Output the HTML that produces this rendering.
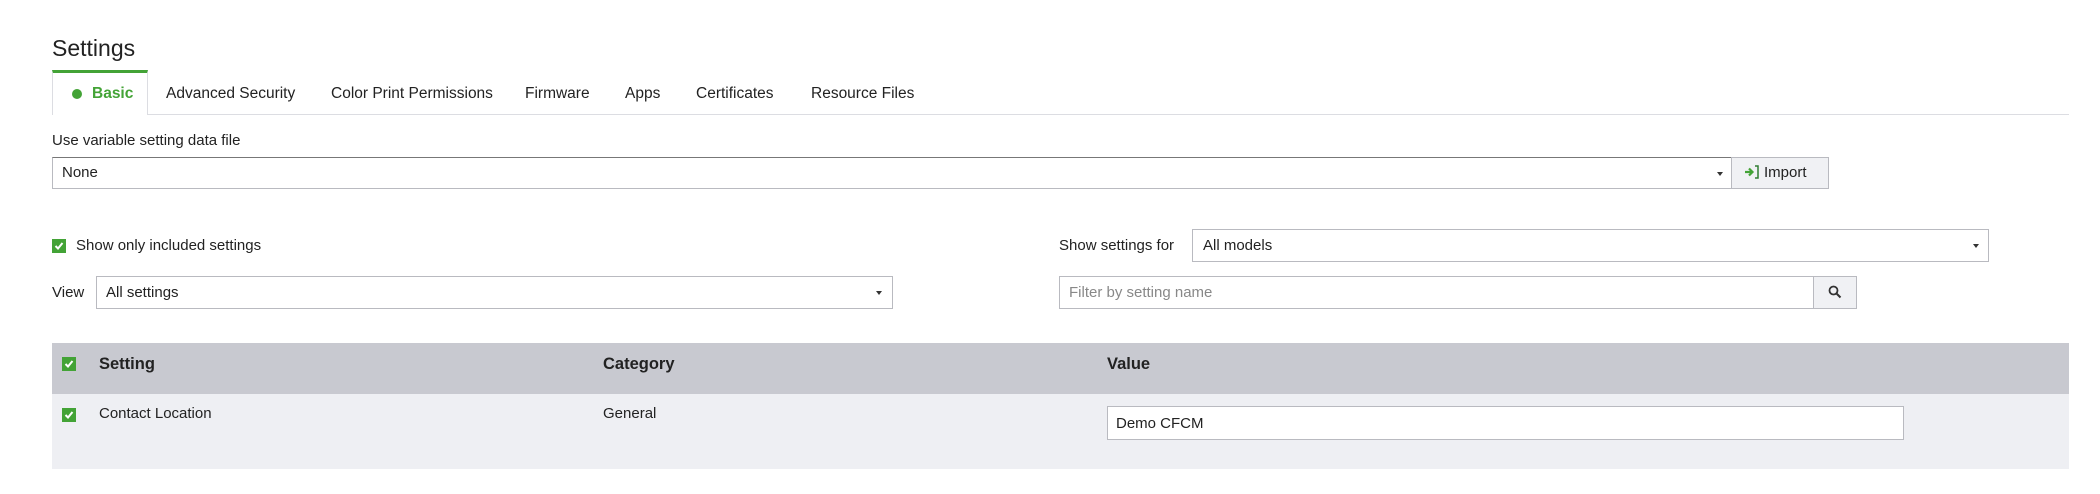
<!DOCTYPE html>
<html><head><meta charset="utf-8"><style>
*{box-sizing:border-box;margin:0;padding:0}
body{width:2100px;height:494px;background:#fff;font-family:"Liberation Sans",sans-serif;color:#222;position:relative;overflow:hidden;font-size:15px}
.a{position:absolute}
.box{position:absolute;border:1px solid #b9bac0;background:#fff}
.arrow{position:absolute;width:0;height:0;border-left:3px solid transparent;border-right:3px solid transparent;border-top:4px solid #333}
.cb{position:absolute;width:14px;height:14px;background:#43a336}
.cb svg{position:absolute;left:2px;top:2px}
.tab{position:absolute;top:85px;font-size:15.5px}
</style></head><body>
<div class="a" style="left:52px;top:35px;font-size:23px">Settings</div>
<div class="a" style="left:52px;top:114px;width:2017px;height:1px;background:#dcdde2"></div>
<div class="a" style="left:52px;top:70px;width:96px;height:45px;background:#fff;border-left:1px solid #dcdde2;border-right:1px solid #dcdde2;border-top:3px solid #43a336"></div>
<div class="a" style="left:72px;top:89px;width:10px;height:10px;border-radius:50%;background:#43a336"></div>
<div class="tab" style="left:92px;color:#43a336;font-weight:bold">Basic</div>
<div class="tab" style="left:166px">Advanced Security</div>
<div class="tab" style="left:331px">Color Print Permissions</div>
<div class="tab" style="left:525px">Firmware</div>
<div class="tab" style="left:625px">Apps</div>
<div class="tab" style="left:696px">Certificates</div>
<div class="tab" style="left:811px">Resource Files</div>

<div class="a" style="left:52px;top:132px">Use variable setting data file</div>
<div class="box" style="left:52px;top:157px;width:1680px;height:32px;border-top-color:#777"></div>
<div class="a" style="left:62px;top:164px">None</div>
<div class="arrow" style="left:1717px;top:172px"></div>
<div class="box" style="left:1731px;top:157px;width:98px;height:32px;background:#f0f1f4"></div>
<svg class="a" style="left:1744px;top:165px" width="16" height="14" viewBox="0 0 16 14"><path d="M1 7h7M5 3.5L8.5 7 5 10.5" stroke="#43a336" stroke-width="2.2" fill="none"/><path d="M11 1h3v12h-3" stroke="#2f7d32" stroke-width="1.5" fill="none"/></svg>
<div class="a" style="left:1764px;top:164px">Import</div>

<div class="cb" style="left:52px;top:239px"><svg width="10" height="10" viewBox="0 0 10 10"><path d="M1.5 5l2.5 2.5L8.5 2" stroke="#fff" stroke-width="2" fill="none"/></svg></div>
<div class="a" style="left:76px;top:237px">Show only included settings</div>

<div class="a" style="left:1059px;top:237px">Show settings for</div>
<div class="box" style="left:1192px;top:229px;width:797px;height:33px"></div>
<div class="a" style="left:1203px;top:237px">All models</div>
<div class="arrow" style="left:1973px;top:244px"></div>

<div class="a" style="left:52px;top:284px">View</div>
<div class="box" style="left:96px;top:276px;width:797px;height:33px"></div>
<div class="a" style="left:106px;top:284px">All settings</div>
<div class="arrow" style="left:876px;top:291px"></div>

<div class="box" style="left:1059px;top:276px;width:755px;height:33px"></div>
<div class="a" style="left:1069px;top:284px;color:#888">Filter by setting name</div>
<div class="box" style="left:1813px;top:276px;width:44px;height:33px;background:#f0f1f4"></div>
<svg class="a" style="left:1828px;top:285px" width="14" height="14" viewBox="0 0 14 14"><circle cx="5.5" cy="5.5" r="4" stroke="#333" stroke-width="1.8" fill="none"/><path d="M8.5 8.5l4 4" stroke="#333" stroke-width="2"/></svg>

<div class="a" style="left:52px;top:343px;width:2017px;height:51px;background:#c8c9d0"></div>
<div class="a" style="left:52px;top:394px;width:2017px;height:75px;background:#eeeff3"></div>
<div class="cb" style="left:62px;top:357px"><svg width="10" height="10" viewBox="0 0 10 10"><path d="M1.5 5l2.5 2.5L8.5 2" stroke="#fff" stroke-width="2" fill="none"/></svg></div>
<div class="a" style="left:99px;top:355px;font-weight:bold;font-size:16.5px">Setting</div>
<div class="a" style="left:603px;top:355px;font-weight:bold;font-size:16.5px">Category</div>
<div class="a" style="left:1107px;top:355px;font-weight:bold;font-size:16.5px">Value</div>
<div class="cb" style="left:62px;top:408px"><svg width="10" height="10" viewBox="0 0 10 10"><path d="M1.5 5l2.5 2.5L8.5 2" stroke="#fff" stroke-width="2" fill="none"/></svg></div>
<div class="a" style="left:99px;top:405px">Contact Location</div>
<div class="a" style="left:603px;top:405px">General</div>
<div class="box" style="left:1107px;top:406px;width:797px;height:34px"></div>
<div class="a" style="left:1116px;top:415px">Demo CFCM</div>
</body></html>
